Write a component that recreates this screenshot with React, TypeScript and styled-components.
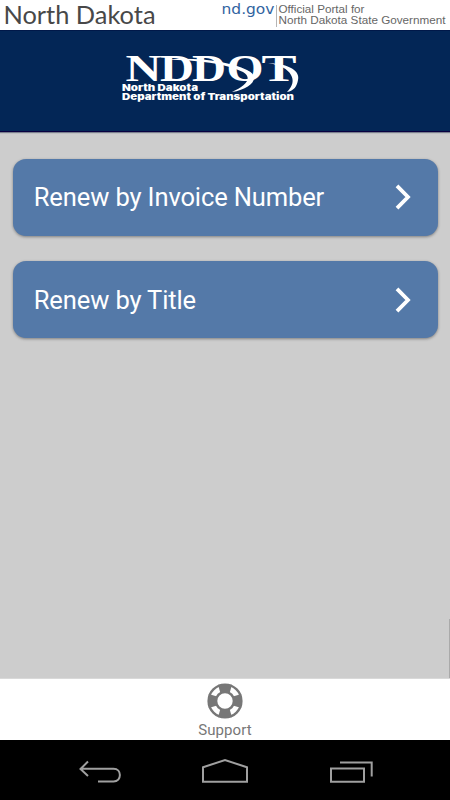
import React from 'react';
import styled, { createGlobalStyle } from 'styled-components';

const GlobalStyle = createGlobalStyle`
  * { box-sizing: border-box; }
  body { margin: 0; background: #cdcdcd; font-family: Roboto, "Liberation Sans", sans-serif; }
`;

const Screen = styled.div`
  display: flex;
  flex-direction: column;
  width: 450px;
  height: 800px;
  overflow: hidden;
  background: #cdcdcd;
`;

const StateBar = styled.header`
  height: 30px;
  flex: none;
  background: #fff;
`;

const Banner = styled.div`
  flex: none;
  height: 102px;
  background: #032656;
  border-top: 1px solid #001849;
  border-bottom: 1px solid #09003f;
  box-shadow: 0 1px 1px rgba(40, 50, 80, 0.5);
  svg { display: block; }
`;

const Content = styled.main`
  flex: 1;
  display: flex;
  justify-content: space-between;
  border-bottom: 1px solid #d9d9d9;
`;

const Menu = styled.nav`
  flex: 1;
  display: flex;
  flex-direction: column;
  gap: 25.5px;
  padding: 26.8px 11.4px 0 12.6px;
`;

const MenuButton = styled.button`
  display: flex;
  align-items: center;
  justify-content: space-between;
  height: 77px;
  padding: 0 25.4px 0 21.2px;
  border: 0;
  border-radius: 13px;
  background: #5479a8;
  box-shadow: 0 1px 3px rgba(0, 0, 0, 0.38);
  color: #fff;
  font: 400 25.5px/30px Roboto, sans-serif;
  letter-spacing: -0.12px;
  text-align: left;
`;

const ScrollThumb = styled.div`
  align-self: flex-end;
  width: 1px;
  height: 59px;
  background: #aaa;
`;

const TabBar = styled.footer`
  flex: none;
  height: 61px;
  display: flex;
  flex-direction: column;
  align-items: center;
  padding-top: 4px;
  background: #fff;
  color: #777;
`;

const TabLabel = styled.span`
  font-size: 15px;
  line-height: 18px;
  letter-spacing: 0.1px;
  margin-top: 2px;
`;

const SystemBar = styled.div`
  flex: none;
  height: 60px;
  background: #000;
  svg { display: block; }
`;

const StateLogo = () => (
  <svg width="450" height="30" viewBox="0 0 450 30">
    <text x="3.5" y="23.5" fontFamily="Lato" fontSize="24.5" fill="#484848" textLength="152" lengthAdjust="spacingAndGlyphs">North Dakota</text>
    <text x="221.5" y="13.5" fontFamily="DejaVu Sans" fontSize="14" fill="#3263a0" textLength="53" lengthAdjust="spacingAndGlyphs">nd.gov</text>
    <path d="M276.5 5V27" stroke="#b5b5b5" />
    <g fontFamily="Liberation Sans" fontSize="10.5" fill="#666">
      <text x="278.5" y="13.3" textLength="86" lengthAdjust="spacingAndGlyphs">Official Portal for</text>
      <text x="278.5" y="24" textLength="167" lengthAdjust="spacingAndGlyphs">North Dakota State Government</text>
    </g>
  </svg>
);

const letters: [string, number, number][] = [
  ['N', 125.5, 36],
  ['D', 160, 34],
  ['D', 192, 34],
  ['O', 226.5, 37],
  ['T', 261.5, 35],
];

const DepartmentLogo = () => (
  <svg width="450" height="100" viewBox="0 31 450 100" fill="#fff">
    <g fontFamily="Liberation Serif" fontSize="37.5" fontWeight="700">
      {letters.map(([letter, x, width]) => (
        <text key={x} x={x} y="80.8" textLength={width} lengthAdjust="spacingAndGlyphs">{letter}</text>
      ))}
    </g>
    <path d="M166 59.5C199 57 230 62 247 70C262 77 251 89 232 92C246 86 253 78 243 72C225 63 198 60.5 166 59.5Z" />
    <path d="M268 63C290 64 300 71 298 80C297 86 294 91 287 92C293 86 294 80 291 75C288 69 280 65 268 63Z" />
    <g fontFamily="Inter" fontSize="9.2" fontWeight="900">
      <text x="122" y="90.6" textLength="76" lengthAdjust="spacingAndGlyphs">North Dakota</text>
      <text x="122" y="100.2" textLength="172" lengthAdjust="spacingAndGlyphs">Department of Transportation</text>
    </g>
  </svg>
);

const Chevron = () => (
  <svg width="18" height="26" viewBox="0 0 18 26" fill="none" stroke="#fff" strokeWidth="3.8">
    <path d="M3 1.8L14 13L3 24.2" />
  </svg>
);

const SupportIcon = () => (
  <svg width="36" height="36" viewBox="-18 -18 36 36" fill="none" stroke="#777">
    <circle r="16.4" strokeWidth="2.4" />
    <circle r="9" strokeWidth="2.6" />
    <g fill="#777" stroke="none">
      {[0, 90, 180, 270].map((angle) => (
        <path key={angle} transform={`rotate(${angle})`} d="M-7 -16.2H7L4.6 -8H-4.6Z" />
      ))}
    </g>
  </svg>
);

const SystemIcons = () => (
  <svg width="450" height="60" viewBox="0 740 450 60" fill="none" stroke="#a0a0a0" strokeWidth="2">
    <path d="M88 761.5L80.5 769L88 776M81 768.7H113.5C122 768.7 122 781.5 113.5 781.5H98" />
    <path d="M203 781.8V767.3L225 760L247 767.3V781.8Z" />
    <path d="M331 768.5H364V781.7H331ZM340 762.5H371.7V776.5" />
  </svg>
);

export default function App() {
  return (
    <>
      <GlobalStyle />
      <Screen>
        <StateBar><StateLogo /></StateBar>
        <Banner><DepartmentLogo /></Banner>
        <Content>
          <Menu>
            <MenuButton>Renew by Invoice Number<Chevron /></MenuButton>
            <MenuButton>Renew by Title<Chevron /></MenuButton>
          </Menu>
          <ScrollThumb />
        </Content>
        <TabBar>
          <SupportIcon />
          <TabLabel>Support</TabLabel>
        </TabBar>
        <SystemBar><SystemIcons /></SystemBar>
      </Screen>
    </>
  );
}
